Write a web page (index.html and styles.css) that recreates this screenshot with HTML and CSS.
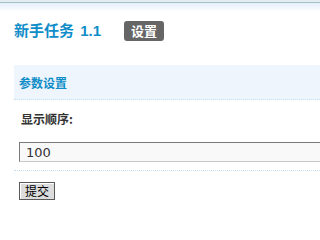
FILE: index.html
```html
<!DOCTYPE html>
<html>
<head>
<meta charset="utf-8">
<link rel="stylesheet" href="styles.css">
</head>
<body>
<div class="topbar"></div>
<div class="title-row">
  <h1 class="title">新手任务 <span class="ver">1.1</span></h1>
  <span class="badge">设置</span>
</div>
<div class="panel">
  <div class="panel-head">参数设置</div>
  <div class="field">
    <div class="label">显示顺序:</div>
    <input class="text-input" type="text" value="100">
  </div>
  <div class="actions">
    <button class="btn" type="button">提交</button>
  </div>
</div>
</body>
</html>
```
FILE: styles.css
```css
html, body {
  margin: 0;
  padding: 0;
  background: #fff;
  overflow: hidden;
}
body {
  font-family: "Liberation Sans", "Noto Sans CJK SC", sans-serif;
  font-size: 12px;
  color: #333;
}
.topbar {
  height: 12px;
  background: linear-gradient(to bottom, #e3edf1 0, #e3edf1 2px, #a8c0c8 2px, #a8c0c8 3px, #e2eff9 3px, #ffffff 12px);
}
.title-row {
  display: flex;
  align-items: center;
  padding: 9px 0 0 14px;
  height: 20px;
}
.title {
  margin: 0;
  font-family: "Liberation Sans", "Noto Sans CJK SC", sans-serif;
  font-size: 15px;
  font-weight: bold;
  color: #0f8dc8;
  line-height: 20px;
  width: 110px;
  white-space: nowrap;
}
.ver {
  margin-left: 2px;
}
.badge {
  display: inline-block;
  width: 40px;
  height: 20px;
  line-height: 20px;
  text-align: center;
  background: #666;
  color: #fff;
  font-family: "Noto Sans CJK SC", sans-serif;
  font-weight: bold;
  font-size: 13px;
  border-radius: 3px;
}
.panel {
  margin: 24px 0 0 14px;
  overflow: hidden;
}
.panel-head {
  height: 35px;
  line-height: 35px;
  padding-left: 5px;
  background: #eef5fc;
  border-bottom: 1px dotted #c6dff0;
  box-sizing: border-box;
  font-family: "Noto Sans CJK SC", sans-serif;
  font-weight: bold;
  font-size: 12px;
  color: #0f8dc8;
}
.field {
  padding: 12px 0 0 5px;
  border-bottom: 1px dotted #c6dff0;
  height: 71px;
  box-sizing: border-box;
}
.label {
  font-family: "Noto Sans CJK SC", sans-serif;
  font-weight: bold;
  font-size: 12px;
  line-height: 14px;
  margin-left: 2px;
  color: #333;
}
.text-input {
  display: block;
  margin-top: 16px;
  width: calc(100% + 4px);
  height: 20px;
  box-sizing: border-box;
  border: 1px solid;
  border-color: #7a7a7a #c8c8c8 #c8c8c8 #7a7a7a;
  background: #f9f9f9;
  padding: 0 6px;
  font-family: "DejaVu Sans", sans-serif;
  font-size: 13px;
  color: #333;
  outline: none;
}
.actions {
  padding: 11px 0 0 5px;
}
.btn {
  width: 36px;
  height: 18px;
  padding: 0;
  margin: 0;
  background: #dcdcdc;
  border: 1px solid #5a5a5a;
  box-shadow: inset 1px 1px 0 #ffffff;
  font-family: "Noto Sans CJK SC", sans-serif;
  font-size: 12px;
  line-height: 16px;
  color: #000;
}
```
